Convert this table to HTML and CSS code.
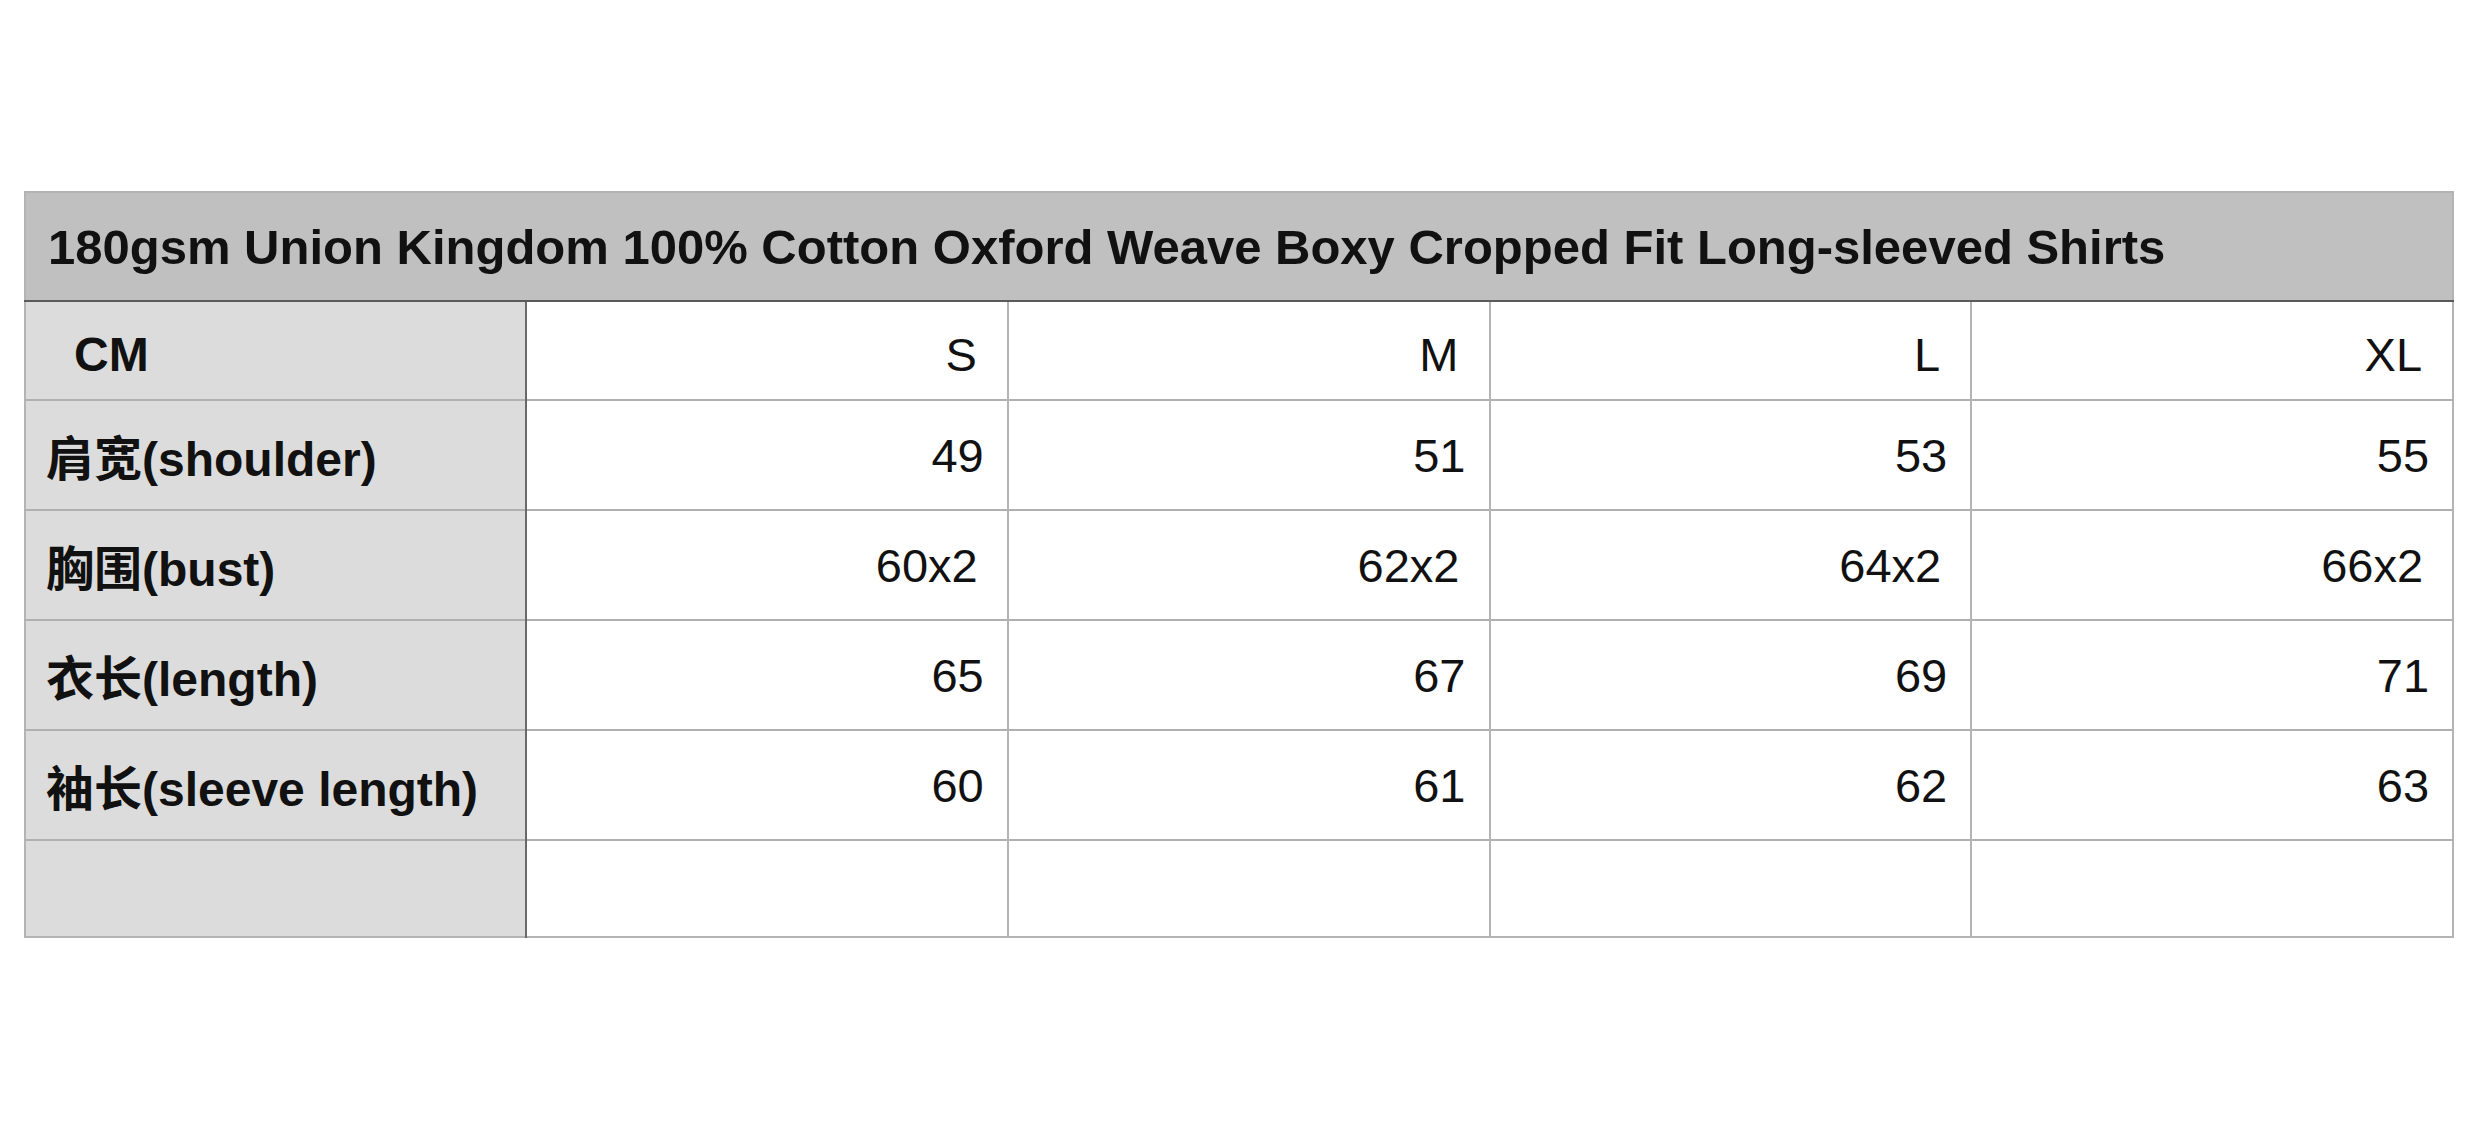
FILE: index.html
```html
<!DOCTYPE html>
<html lang="zh">
<head>
<meta charset="utf-8">
<title>Size chart</title>
<link rel="stylesheet" href="styles.css">
</head>
<body>
<table class="chart">
  <colgroup>
    <col class="c-label">
    <col class="c-size"><col class="c-size"><col class="c-size"><col class="c-size">
  </colgroup>
  <thead>
    <tr class="title-row"><th colspan="5" class="title">180gsm Union Kingdom 100% Cotton Oxford Weave Boxy Cropped Fit Long-sleeved Shirts</th></tr>
  </thead>
  <tbody>
    <tr class="size-row">
      <th class="label cm">CM</th>
      <td class="val size">S</td><td class="val size">M</td><td class="val size">L</td><td class="val size">XL</td>
    </tr>
    <tr class="row">
      <th class="label">肩宽(shoulder)</th>
      <td class="val">49</td><td class="val">51</td><td class="val">53</td><td class="val">55</td>
    </tr>
    <tr class="row">
      <th class="label">胸围(bust)</th>
      <td class="val wide">60x2</td><td class="val wide">62x2</td><td class="val wide">64x2</td><td class="val wide">66x2</td>
    </tr>
    <tr class="row">
      <th class="label">衣长(length)</th>
      <td class="val">65</td><td class="val">67</td><td class="val">69</td><td class="val">71</td>
    </tr>
    <tr class="row">
      <th class="label">袖长(sleeve length)</th>
      <td class="val">60</td><td class="val">61</td><td class="val">62</td><td class="val">63</td>
    </tr>
    <tr class="empty-row">
      <th class="label"></th>
      <td class="val"></td><td class="val"></td><td class="val"></td><td class="val"></td>
    </tr>
  </tbody>
</table>
</body>
</html>
```

FILE: styles.css
```css
html, body {
  margin: 0;
  padding: 0;
  background: #ffffff;
}

body {
  padding: 191px 0 0 24px;
  font-family: "Liberation Sans", Arial, "Noto Sans CJK SC", sans-serif;
  color: #111111;
}

.chart {
  border-collapse: collapse;
  table-layout: fixed;
  width: 2428px;
  border: 2px solid #b4b4b4;
}

.c-label { width: 501px; }
.c-size { width: 481.75px; }

.title {
  background: #c0c0c0;
  height: 109px;
  padding: 0 0 0 22px;
  text-align: left;
  font-weight: bold;
  font-size: 49px;
  border-bottom: 2px solid #5a5a5a;
  box-sizing: border-box;
  white-space: nowrap;
}

.label {
  background: #dcdcdc;
  text-align: left;
  font-weight: bold;
  font-size: 48px;
  padding: 0 0 0 20px;
  border-right: 2px solid #6a6a6a;
  border-top: 2px solid #b0b0b0;
  white-space: nowrap;
}

.label.cm {
  padding-left: 48px;
}

.val {
  background: #ffffff;
  text-align: right;
  font-size: 47px;
  padding: 0 23px 0 0;
  border-left: 2px solid #b4b4b4;
  border-top: 2px solid #b0b0b0;
}

.val.size { padding-right: 30px; }
.val.wide { padding-right: 29px; }

.size-row > * { padding-top: 8px; }
.size-row { height: 99px; }
.row { height: 110px; }
.empty-row { height: 97px; }
```
